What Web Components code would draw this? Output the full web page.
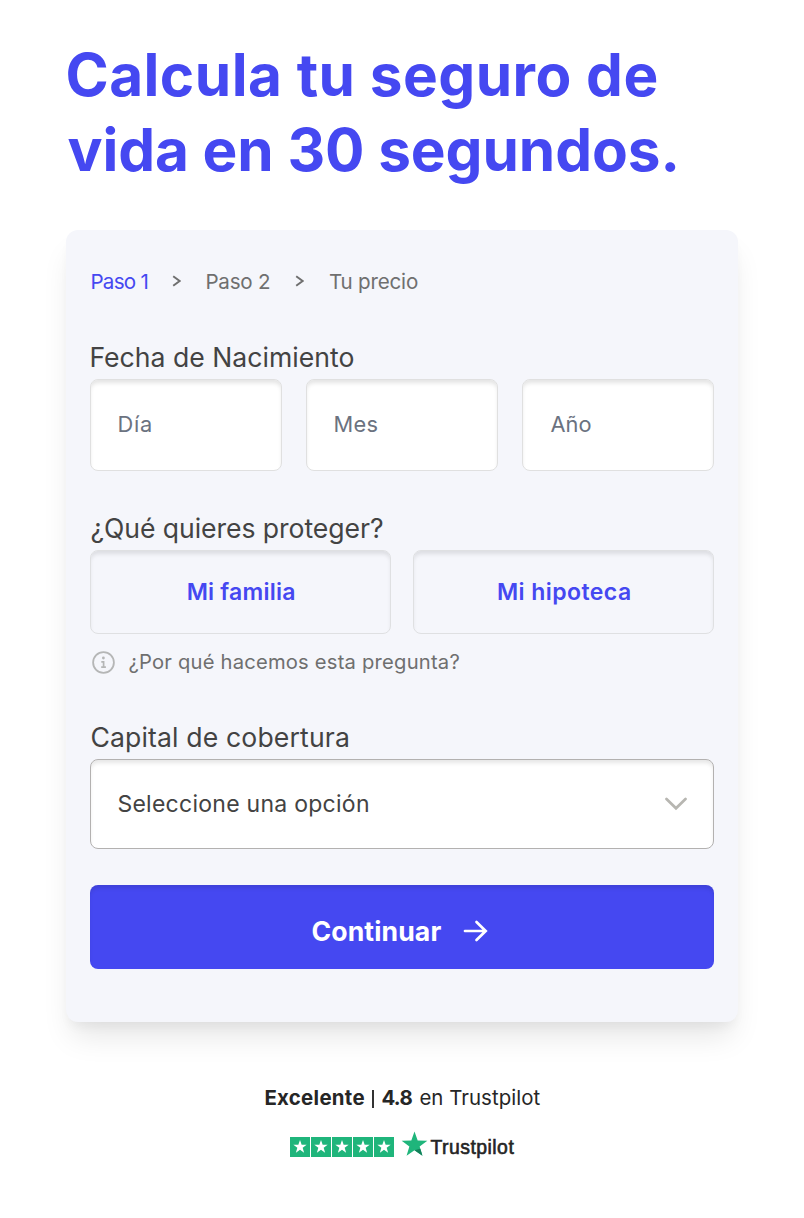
<!DOCTYPE html>
<html lang="es">
<head>
<meta charset="utf-8">
<title>Calcula tu seguro de vida</title>
<style>
html{background:#fff}
body{margin:0;font-family:"DM Sans",Inter,"Noto Sans",sans-serif;color:#434343}
</style>
</head>
<body>
<quote-page></quote-page>
<script>
const define = (name, html, ready) => {
  const tpl = document.createElement('template');
  tpl.innerHTML = html;
  customElements.define(name, class extends HTMLElement {
    constructor() {
      super();
      this.attachShadow({ mode: 'open' }).append(tpl.content.cloneNode(true));
    }
    connectedCallback() { if (ready) ready.call(this); }
  });
};

/* One line of text tracked to a fixed width (w), at size s and weight b. */
const pen = document.createElement('canvas').getContext('2d');
define('fit-text', `<style>
  :host{display:block;flex:none;white-space:nowrap}
  span{display:block}
</style><span><slot></slot></span>`, function () {
  const size = this.getAttribute('s'), weight = this.getAttribute('b') || 440;
  const w = +this.getAttribute('w'), text = this.textContent;
  const face = this.getAttribute('face') || 'Inter';
  pen.font = `${weight} ${size}px "${face}"`;
  const m = pen.measureText(text);
  const ink = m.actualBoundingBoxLeft + m.actualBoundingBoxRight;
  const span = this.shadowRoot.querySelector('span');
  this.style.width = w + 'px';
  span.style.font = `${weight} ${size}px/${this.getAttribute('lh') || 30}px "${face}", sans-serif`;
  span.style.letterSpacing = ((w - ink) / (text.length - 1)).toFixed(3) + 'px';
  span.style.marginLeft = (m.actualBoundingBoxLeft + .4).toFixed(2) + 'px';
});

define('page-title', `<style>
  :host{display:block;color:#4548f1}
  h1{margin:0;font:inherit}
</style><h1>
  <fit-text s="58.5" b="700" lh="75" w="589">Calcula tu seguro de</fit-text>
  <fit-text s="58.5" b="700" lh="75" w="608">vida en 30 segundos.</fit-text>
</h1>`);

define('step-trail', `<style>
  :host{display:flex;align-items:center;height:31px;padding-left:1px;color:#6f6f6f}
  .on{color:#4548f1}
  svg{display:block;flex:none}
  .a{margin:0 25px 1px}
</style>
  <fit-text class="on" s="20.6" w="56">Paso 1</fit-text>
  <svg class="a" width="9" height="12"><path d="M1.2 1.2 7.6 6 1.2 10.8" fill="none" stroke="currentColor" stroke-width="1.9"/></svg>
  <fit-text s="20.6" w="63.5">Paso 2</fit-text>
  <svg class="a" width="9" height="12"><path d="M1.2 1.2 7.6 6 1.2 10.8" fill="none" stroke="currentColor" stroke-width="1.9"/></svg>
  <fit-text s="20.6" w="89">Tu precio</fit-text>`);

define('form-field', `<style>
  :host{display:block}
  .label{padding-left:1px;color:#434343}
  .row{display:flex;gap:var(--gap,24px)}
</style><div class="label"><slot name="label"></slot></div><div class="row"><slot></slot></div>`);

define('date-input', `<style>
  :host{box-sizing:border-box;display:flex;align-items:center;flex:1;height:92px;padding:0 27px 2px;
    background:#fff;border:1px solid #e0e0e0;border-radius:8px;box-shadow:inset 0 4px 4px -1px rgba(0,0,0,.11);color:#6b7280}
</style><slot></slot>`);

define('choice-button', `<style>
  :host{box-sizing:border-box;display:flex;align-items:center;justify-content:center;flex:1;height:84px;
    border:1px solid #dfe0e2;border-radius:8px;box-shadow:inset 0 4px 4px -1px rgba(0,0,0,.1);color:#4548f1}
</style><slot></slot>`);

define('info-hint', `<style>
  :host{display:flex;align-items:center;height:30px;margin-top:13px;padding-left:2px;gap:14px;color:#6f6f6f}
  svg{display:block}
</style>
<svg width="23" height="23" viewBox="0 0 23 23" fill="none" stroke="#b5b6b6" style="margin-top:1px">
  <circle cx="11.5" cy="11.5" r="10.4" stroke-width="1.8"/>
  <circle cx="11.4" cy="7" r="1.4" fill="#b5b6b6" stroke="none"/>
  <path d="M9.3 10.9h2.3v5.1M9.2 16.1h4.7" stroke-width="1.7"/>
</svg><slot></slot>`);

define('select-box', `<style>
  :host{box-sizing:border-box;display:flex;align-items:center;justify-content:space-between;flex:1;height:90px;padding:0 26px 0 27px;
    background:#fff;border:1px solid #b3b1b0;border-radius:8px;box-shadow:inset 0 4px 4px -1px rgba(0,0,0,.1);color:#434343}
  svg{display:block}
</style><slot></slot>
<svg width="22" height="14" viewBox="0 0 22 14"><path d="M1.5 2 11 11.3 20.5 2" fill="none" stroke="#b7b6b1" stroke-width="2.7" stroke-linecap="round"/></svg>`);

define('submit-button', `<style>
  :host{box-sizing:border-box;display:flex;align-items:center;justify-content:center;height:84px;margin-top:36px;padding:7px 4px 0 0;gap:22px;
    background:#4548f1;border-radius:8px;box-shadow:inset 0 4px 4px -1px rgba(0,0,0,.11);color:#fff}
  svg{display:block}
</style><slot></slot>
<svg width="25" height="22" viewBox="0 0 25 22" fill="none" stroke="#fff" stroke-width="2.7" stroke-linecap="round" stroke-linejoin="miter"><path d="M2 11H22M13.5 2l9.2 9-9.2 9"/></svg>`);

define('quote-card', `<style>
  :host{box-sizing:border-box;display:block;height:792px;margin-top:43px;padding:36px 24px 53px;background:#f5f6fb;border-radius:12px;
    box-shadow:0 20px 30px -6px rgba(0,0,0,.1),0 8px 12px -4px rgba(0,0,0,.05)}
  .birth{margin-top:38px}
  .protect{margin-top:35px;--gap:22px}
  .capital{margin-top:38px}
</style>
<step-trail></step-trail>
<form-field class="birth">
  <fit-text slot="label" s="26.6" lh="44" w="262">Fecha de Nacimiento</fit-text>
  <date-input><fit-text s="21.8" w="32.5">Día</fit-text></date-input>
  <date-input><fit-text s="21.8" w="43">Mes</fit-text></date-input>
  <date-input><fit-text s="21.8" w="40">Año</fit-text></date-input>
</form-field>
<form-field class="protect">
  <fit-text slot="label" s="26.6" lh="44" w="291.5">¿Qué quieres proteger?</fit-text>
  <choice-button><fit-text s="23" b="600" w="106.5">Mi familia</fit-text></choice-button>
  <choice-button><fit-text s="23" b="600" w="132">Mi hipoteca</fit-text></choice-button>
</form-field>
<info-hint><fit-text s="20.2" w="330">¿Por qué hacemos esta pregunta?</fit-text></info-hint>
<form-field class="capital">
  <fit-text slot="label" s="26.6" lh="44" w="256.5">Capital de cobertura</fit-text>
  <select-box><fit-text s="23" w="249.5">Seleccione una opción</fit-text></select-box>
</form-field>
<submit-button><fit-text s="26.6" b="700" w="129">Continuar</fit-text></submit-button>`);

const star = 'M0-10 2.35-3.24 9.51-3.09 3.8 1.24 5.88 8.09 0 4 -5.88 8.09 -3.8 1.24 -9.51-3.09 -2.35-3.24Z';
define('rating-stars', `<style>:host{display:flex;gap:1px}svg{display:block;background:#1fb57b}</style>` +
  `<svg width="20" height="20" viewBox="-10 -10 20 20"><path d="${star}" fill="#fff" transform="scale(.7)"/></svg>`.repeat(5));

define('trust-footer', `<style>
  :host{display:block;margin-top:60px;color:#262626}
  .line{display:flex;align-items:center;height:31px;margin-left:199px}
  .bar{width:2px;height:18px;margin:2px 8px 0;background:#333}
  .en{margin-left:8px}
  .logo{display:flex;align-items:flex-end;height:28px;margin:17px 0 0 224px}
  rating-stars{margin-bottom:1px}
  .big{display:block;margin:0 2px 1px 7px}
  .name{-webkit-text-stroke:.6px #222;margin-bottom:-4px}
</style>
<div class="line">
  <fit-text s="20.4" b="700" w="99">Excelente</fit-text><i class="bar"></i>
  <fit-text s="20.4" b="700" w="30">4.8</fit-text>
  <fit-text class="en" s="20.4" w="120">en Trustpilot</fit-text>
</div>
<div class="logo">
  <rating-stars></rating-stars>
  <svg class="big" width="27" height="26" viewBox="-10 -10 20 18.6"><path d="${star}" fill="#1fb57b"/><path d="M4.3 2.8 0 4 5.88 8.09Z" fill="#12805a"/></svg>
  <fit-text class="name" face="Liberation Sans" b="400" s="19.4" w="84">Trustpilot</fit-text>
</div>`);

define('quote-page', `<style>
  :host{box-sizing:border-box;display:block;width:804px;height:1218px;padding:37px 66px 0;background:#fff;overflow:hidden}
  page-title{padding-left:1px}
</style><page-title></page-title><quote-card></quote-card><trust-footer></trust-footer>`);
</script>
</body>
</html>
